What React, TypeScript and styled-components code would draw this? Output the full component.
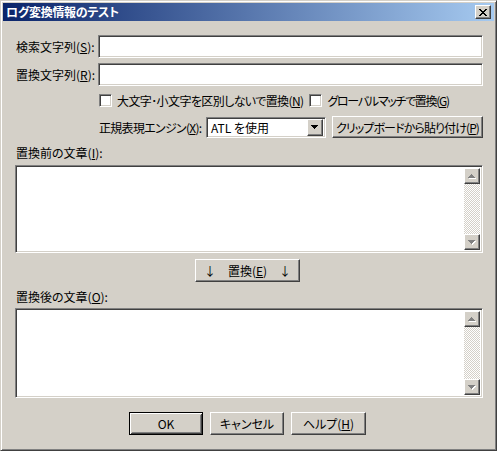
import React from "react";
import styled, { createGlobalStyle } from "styled-components";

const Global = createGlobalStyle`
  html, body { margin: 0; padding: 0; background: #d4d0c8; }
  body {
    font-family: "Noto Sans CJK JP", "Noto Sans", sans-serif;
    font-size: 12px;
    font-feature-settings: "palt";
    color: #000;
  }
  * { box-sizing: border-box; }
`;

const Window = styled.div`
  width: 497px;
  height: 451px;
  background: #d4d0c8;
  border: 1px solid;
  border-color: #d4d0c8 #404040 #404040 #d4d0c8;
  box-shadow: inset 1px 1px #fff, inset -1px -1px #808080;
  padding: 2px;
  display: flex;
  flex-direction: column;
`;

const TitleBar = styled.div`
  height: 18px;
  margin-bottom: 1px;
  display: flex;
  align-items: center;
  justify-content: space-between;
  padding: 0 3px 0 3px;
  background: linear-gradient(to right, #0a246a, #a6caf0);
  color: #fff;
  font-weight: bold;
  line-height: 18px;
  letter-spacing: -0.3px;
`;

const Raised = `
  background: #d4d0c8;
  border: 1px solid;
  border-color: #fff #404040 #404040 #fff;
  box-shadow: inset -1px -1px #808080, inset 1px 1px #d4d0c8;
`;

const Sunken = `
  background: #fff;
  border: 1px solid;
  border-color: #808080 #fff #fff #808080;
  box-shadow: inset 1px 1px #404040, inset -1px -1px #d4d0c8;
`;

const CloseButton = styled.div`
  ${Raised}
  width: 16px;
  height: 14px;
  display: flex;
  align-items: center;
  justify-content: center;
`;

const Body = styled.div`
  flex: 1;
  display: flex;
  flex-direction: column;
  padding: 13px 11px 0 12px;
`;

const FieldRow = styled.div<{ $mt?: number }>`
  display: flex;
  align-items: center;
  height: 23px;
  margin-top: ${({ $mt }) => $mt ?? 0}px;
`;

const FieldLabel = styled.label<{ $w: number; $ls?: number }>`
  width: ${({ $w }) => $w}px;
  padding-left: 1px;
  white-space: nowrap;
  flex-shrink: 0;
  letter-spacing: ${({ $ls }) => $ls ?? 0}px;
`;

const TextInput = styled.div`
  ${Sunken}
  flex: 1;
  height: 23px;
`;

const CheckRow = styled.div`
  display: flex;
  align-items: center;
  height: 13px;
  margin-top: 8px;
  padding-left: 84px;
  white-space: nowrap;
`;

const CheckItem = styled.div<{ $ml?: number; $ls: number }>`
  display: flex;
  align-items: center;
  gap: 5px;
  margin-left: ${({ $ml }) => $ml ?? 0}px;
  letter-spacing: ${({ $ls }) => $ls}px;
`;

const CheckBox = styled.div`
  ${Sunken}
  width: 13px;
  height: 13px;
  flex-shrink: 0;
`;

const EngineRow = styled.div`
  display: flex;
  align-items: center;
  height: 22px;
  margin-top: 9px;
  padding-left: 83px;
`;

const Combo = styled.div`
  ${Sunken}
  width: 120px;
  height: 21px;
  padding: 2px;
  display: flex;
  align-items: center;
  justify-content: space-between;
`;

const ComboText = styled.span`
  padding-left: 2px;
`;

const ComboButton = styled.div`
  ${Raised}
  width: 16px;
  height: 17px;
  display: flex;
  align-items: center;
  justify-content: center;
`;

const Button = styled.div<{ $w?: number; $default?: boolean }>`
  ${Raised}
  height: 23px;
  width: ${({ $w }) => ($w ? `${$w}px` : "auto")};
  display: flex;
  align-items: center;
  justify-content: center;
  white-space: nowrap;
  ${({ $default }) =>
    $default &&
    `
    border-color: #000;
    box-shadow: inset 1px 1px #fff, inset -1px -1px #404040, inset 2px 2px #d4d0c8, inset -2px -2px #808080;
  `}
`;

const PasteButton = styled(Button)`
  flex: 1;
  height: 22px;
  margin-left: 6px;
  letter-spacing: -0.9px;
`;

const SectionLabel = styled.div<{ $mt: number }>`
  height: 14px;
  line-height: 14px;
  margin-top: ${({ $mt }) => $mt}px;
  padding-left: 1px;
`;

const TextArea = styled.div<{ $h: number; $mt: number }>`
  ${Sunken}
  height: ${({ $h }) => $h}px;
  margin-top: ${({ $mt }) => $mt}px;
  padding: 2px;
  display: flex;
  justify-content: flex-end;
`;

const ScrollBar = styled.div`
  width: 16px;
  display: flex;
  flex-direction: column;
  justify-content: space-between;
  background-color: #fff;
  background-image: conic-gradient(#d4d0c8 25%, #fff 0 50%, #d4d0c8 0 75%, #fff 0);
  background-size: 2px 2px;
`;

const ScrollButton = styled.div`
  ${Raised}
  width: 16px;
  height: 16px;
  display: flex;
  align-items: center;
  justify-content: center;
`;

const ReplaceButton = styled(Button)`
  margin-top: 6px;
  margin-left: 180px;
  gap: 12px;
`;

const FooterRow = styled.div`
  display: flex;
  gap: 7px;
  margin-top: 14px;
  padding-left: 114px;
`;

const Key = styled.u`
  text-underline-offset: 1px;
`;

function Arrow({ dir, color, shadow }: { dir: "up" | "down"; color: string; shadow?: boolean }) {
  const rows = [
    [3, 1],
    [2, 3],
    [1, 5],
    [0, 7],
  ];
  const ordered = dir === "up" ? rows : [...rows].reverse();
  return (
    <svg width="8" height="5" viewBox="0 0 8 5" shapeRendering="crispEdges">
      {shadow &&
        ordered.map(([x, w], i) => (
          <rect key={`s${i}`} x={x + 1} y={i + 1} width={w} height={1} fill="#fff" />
        ))}
      {ordered.map(([x, w], i) => (
        <rect key={i} x={x} y={i} width={w} height={1} fill={color} />
      ))}
    </svg>
  );
}

function CloseGlyph() {
  const rows = ["xx....xx", ".xx..xx.", "..xxxx..", "...xx...", "..xxxx..", ".xx..xx.", "xx....xx"];
  return (
    <svg width="8" height="7" viewBox="0 0 8 7" shapeRendering="crispEdges">
      {rows.flatMap((r, y) =>
        r.split("").map((c, x) => (c === "x" ? <rect key={`${x}-${y}`} x={x} y={y} width={1} height={1} fill="#000" /> : null))
      )}
    </svg>
  );
}

function ScrollTextArea({ h, mt }: { h: number; mt: number }) {
  return (
    <TextArea $h={h} $mt={mt}>
      <ScrollBar>
        <ScrollButton>
          <Arrow dir="up" color="#808080" shadow />
        </ScrollButton>
        <ScrollButton>
          <Arrow dir="down" color="#808080" shadow />
        </ScrollButton>
      </ScrollBar>
    </TextArea>
  );
}

export default function App() {
  return (
    <>
      <Global />
      <Window>
        <TitleBar>
          <span>ログ変換情報のテスト</span>
          <CloseButton>
            <CloseGlyph />
          </CloseButton>
        </TitleBar>
        <Body>
          <FieldRow>
            <FieldLabel $w={83}>
              検索文字列(<Key>S</Key>):
            </FieldLabel>
            <TextInput />
          </FieldRow>
          <FieldRow $mt={5}>
            <FieldLabel $w={83}>
              置換文字列(<Key>R</Key>):
            </FieldLabel>
            <TextInput />
          </FieldRow>
          <CheckRow>
            <CheckItem $ls={-0.6}>
              <CheckBox />
              <span>
                大文字･小文字を区別しないで置換(<Key>N</Key>)
              </span>
            </CheckItem>
            <CheckItem $ml={6} $ls={-1.3}>
              <CheckBox />
              <span>
                グローバルマッチで置換(<Key>G</Key>)
              </span>
            </CheckItem>
          </CheckRow>
          <EngineRow>
            <FieldLabel $w={108} $ls={-0.7}>
              正規表現エンジン(<Key>X</Key>):
            </FieldLabel>
            <Combo>
              <ComboText>ATL を使用</ComboText>
              <ComboButton>
                <Arrow dir="down" color="#000" />
              </ComboButton>
            </Combo>
            <PasteButton>
              クリップボードから貼り付け(<Key>P</Key>)
            </PasteButton>
          </EngineRow>
          <SectionLabel $mt={8}>
            置換前の文章(<Key>I</Key>):
          </SectionLabel>
          <ScrollTextArea h={88} mt={5} />
          <ReplaceButton $w={105}>
            <span>↓</span>
            <span>
              置換(<Key>E</Key>)
            </span>
            <span>↓</span>
          </ReplaceButton>
          <SectionLabel $mt={8}>
            置換後の文章(<Key>O</Key>):
          </SectionLabel>
          <ScrollTextArea h={90} mt={4} />
          <FooterRow>
            <Button $w={74} $default>
              OK
            </Button>
            <Button $w={74}>キャンセル</Button>
            <Button $w={75}>
              ヘルプ(<Key>H</Key>)
            </Button>
          </FooterRow>
        </Body>
      </Window>
    </>
  );
}
